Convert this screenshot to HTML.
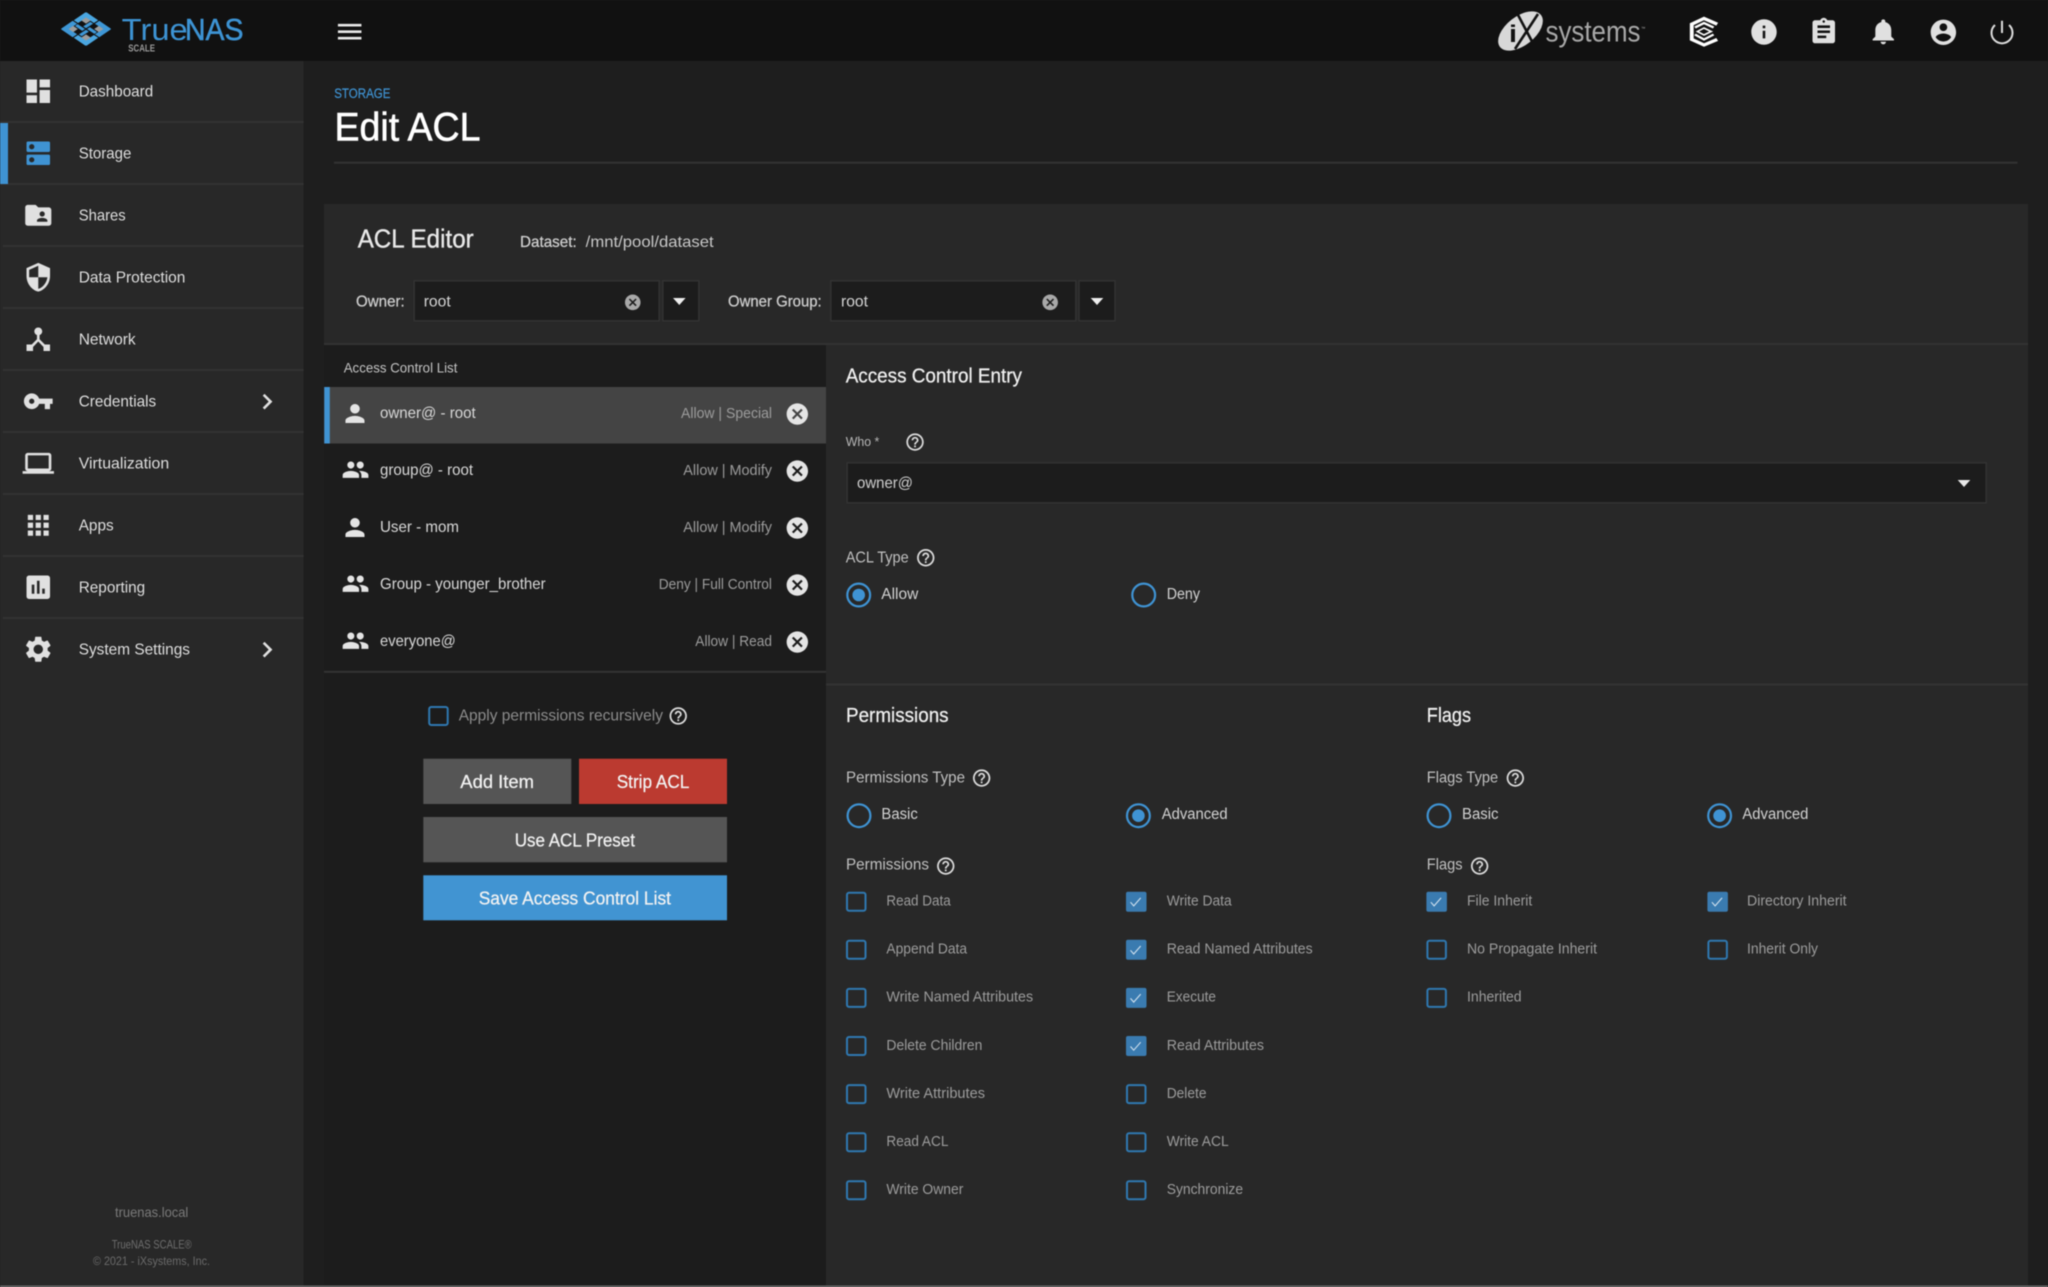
<!DOCTYPE html>
<html lang="en">
<head>
<meta charset="utf-8">
<title>Edit ACL - TrueNAS</title>
<style>
html,body{margin:0;padding:0;background:#1e1e1e;width:2048px;height:1287px;overflow:hidden}
svg{display:block;filter:blur(.45px)}
text{font-family:"Liberation Sans",Arial,sans-serif}
.nav{font-size:16px;fill:#dedede}
.row{font-size:16px;fill:#d8d8d8}
.st{font-size:14.6px;fill:#9c9c9c}
.lb{font-size:14.6px;fill:#9c9c9c}
.cap{font-size:16px;fill:#c0c0c0}
.rad{font-size:15.5px;fill:#d2d2d2}
.h{font-size:20px;fill:#f0f0f0;stroke:#f0f0f0;stroke-width:.25}
.btn{font-size:18px;fill:#f2f2f2;stroke:#f2f2f2;stroke-width:.25}
</style>
</head>
<body>
<svg width="2048" height="1287" viewBox="0 0 2048 1287" xmlns="http://www.w3.org/2000/svg">
<defs>
<path id="help" d="M11 18h2v-2h-2v2zm1-16C6.48 2 2 6.48 2 12s4.48 10 10 10 10-4.48 10-10S17.52 2 12 2zm0 18c-4.41 0-8-3.59-8-8s3.59-8 8-8 8 3.59 8 8-3.59 8-8 8zm0-14c-2.21 0-4 1.79-4 4h2c0-1.1.9-2 2-2s2 .9 2 2c0 2-3 1.75-3 5h2c0-2.25 3-2.5 3-5 0-2.21-1.79-4-4-4z"/>
<path id="cancel" d="M12 2C6.47 2 2 6.47 2 12s4.47 10 10 10 10-4.47 10-10S17.53 2 12 2zm5 13.59L15.59 17 12 13.41 8.41 17 7 15.59 10.59 12 7 8.41 8.41 7 12 10.59 15.59 7 17 8.41 13.41 12 17 15.59z"/>
<path id="person" d="M12 12c2.21 0 4-1.79 4-4s-1.79-4-4-4-4 1.79-4 4 1.79 4 4 4zm0 2c-2.67 0-8 1.34-8 4v2h16v-2c0-2.66-5.33-4-8-4z"/>
<path id="group" d="M16 11c1.66 0 2.99-1.34 2.99-3S17.66 5 16 5c-1.66 0-3 1.34-3 3s1.34 3 3 3zm-8 0c1.66 0 2.99-1.34 2.99-3S9.66 5 8 5C6.34 5 5 6.34 5 8s1.34 3 3 3zm0 2c-2.33 0-7 1.17-7 3.5V19h14v-2.5c0-2.33-4.67-3.5-7-3.5zm8 0c-.29 0-.62.02-.97.05 1.16.84 1.97 1.97 1.97 3.45V19h6v-2.5c0-2.33-4.67-3.5-7-3.5z"/>
<path id="chev" d="M10 6L8.59 7.41 13.17 12l-4.58 4.59L10 18l6-6z"/>
<g id="cb"><rect x="1" y="1" width="18.5" height="18" rx="2" fill="none" stroke="#2f78b0" stroke-width="2"/></g>
<g id="cc"><rect x="0" y="0" width="20.5" height="20" rx="2" fill="#3a7bb0"/><path d="M4.5 10.5l3.2 3.7 7-8" fill="none" stroke="#cfe0ee" stroke-width="1.1"/></g>
<g id="rad0"><circle r="11.4" fill="none" stroke="#3f93d3" stroke-width="2.2"/></g>
<g id="rad1"><circle r="11.4" fill="none" stroke="#3f93d3" stroke-width="2.2"/><circle r="6.3" fill="#3f93d3"/></g>
<g id="lg">
<polygon fill="#4aa6e0" points="86.5,12.3 98.2,20.2 93.9,23 82.2,15.2"/>
<polygon fill="#3e97d6" points="99.3,20.8 111,28.7 106.6,31.5 94.9,23.7"/>
</g>
</defs>

<rect width="2048" height="1287" fill="#1e1e1e"/>

<!-- top bar -->
<rect width="2048" height="61" fill="#111111"/>
<use href="#lg"/>
<use href="#lg" transform="matrix(-1 0 0 1 172 0)"/>
<use href="#lg" transform="matrix(1 0 0 -1 0 58)"/>
<use href="#lg" transform="matrix(-1 0 0 -1 172 58)"/>
<g fill="#9c9c9c">
<polygon points="86,17.4 90.6,20.5 86,23.6 81.4,20.5"/>
<polygon points="98.8,25.9 103.4,29 98.8,32.1 94.2,29"/>
<polygon points="73.2,25.9 77.8,29 73.2,32.1 68.6,29"/>
<polygon points="86,34.4 90.6,37.5 86,40.6 81.4,37.5"/>
</g>
<g fill="#3e97d6">
<polygon points="90.3,21.7 93.1,23.6 86,28.3 83.2,26.4"/>
<polygon points="89.8,27.1 97,32 94.4,33.9 87,29"/>
<polygon points="82.2,30.9 75,26 77.6,24.1 85,29"/>
<polygon points="81.7,36.3 78.9,34.4 86,29.7 88.8,31.6"/>
</g>
<text x="121.7" y="40" font-size="31" fill="#3d93d3" textLength="66" lengthAdjust="spacingAndGlyphs">True</text>
<text x="185" y="40" font-size="31" fill="#3d93d3" stroke="#3d93d3" stroke-width=".5" textLength="58.5" lengthAdjust="spacingAndGlyphs">NAS</text>
<text x="128.3" y="51.5" font-size="10" font-weight="bold" fill="#9a9a9a" textLength="26.7" lengthAdjust="spacingAndGlyphs">SCALE</text>
<path transform="translate(334,16) scale(1.306)" fill="#e8e8e8" d="M3 18h18v-2H3v2zm0-5h18v-2H3v2zm0-7v2h18V6H3z"/>

<!-- iX systems -->
<ellipse cx="1520.5" cy="31" rx="26" ry="14.5" transform="rotate(-38 1520.5 31)" fill="#d8d8d8"/>
<path d="M1517 13L1536 49M1538 14L1515 49" stroke="#111" stroke-width="2.6" fill="none"/>
<text x="1509" y="42" font-size="24" font-weight="bold" fill="#111111" textLength="8" lengthAdjust="spacingAndGlyphs">i</text>
<text x="1545.5" y="41.5" font-size="30" fill="#a8a8a8" textLength="95" lengthAdjust="spacingAndGlyphs">systems</text>
<text x="1641" y="30" font-size="4.5" fill="#aaaaaa">™</text>

<!-- truecommand -->
<g fill="none" stroke="#ffffff" transform="translate(1704 0) scale(1.2 1) translate(-1677 0)">
<path stroke-width="3.2" d="M1688 24.2L1677 18.4 1666.8 24.2V39.4L1677 45 1688 39.4"/>
<path stroke-width="1.6" d="M1671.5 31.5L1677 28 1683 31.5 1677 35Z"/>
<path stroke-width="2.2" d="M1669.5 34.5L1677 39.5 1685 34.5M1669.5 27.5L1677 23 1685 27.5"/>
</g>

<!-- top icons -->
<path transform="translate(1748.76,16.76) scale(1.27)" fill="#e0e0e0" d="M12 2C6.48 2 2 6.48 2 12s4.48 10 10 10 10-4.48 10-10S17.52 2 12 2zm1 15h-2v-6h2v6zm0-8h-2V7h2v2z"/>
<path transform="translate(1808.75,16.42) scale(1.25,1.28)" fill="#e0e0e0" d="M19 3h-4.18C14.4 1.84 13.3 1 12 1c-1.3 0-2.4.84-2.82 2H5c-1.1 0-2 .9-2 2v14c0 1.1.9 2 2 2h14c1.1 0 2-.9 2-2V5c0-1.1-.9-2-2-2zm-7 0c.55 0 1 .45 1 1s-.45 1-1 1-1-.45-1-1 .45-1 1-1zm2 14H7v-2h7v2zm3-4H7v-2h10v2zm0-4H7V7h10v2z"/>
<path transform="translate(1867.34,16.12) scale(1.33,1.28)" fill="#e0e0e0" d="M12 22c1.1 0 2-.9 2-2h-4c0 1.1.89 2 2 2zm6-6v-5c0-3.07-1.64-5.64-4.5-6.32V4c0-.83-.67-1.5-1.5-1.5s-1.5.67-1.5 1.5v.68C7.63 5.36 6 7.92 6 11v5l-2 2v1h16v-1l-2-2z"/>
<path transform="translate(1928.16,17.06) scale(1.27)" fill="#e0e0e0" d="M12 2C6.48 2 2 6.48 2 12s4.48 10 10 10 10-4.48 10-10S17.52 2 12 2zm0 3c1.66 0 3 1.34 3 3s-1.34 3-3 3-3-1.34-3-3 1.34-3 3-3zm0 14.2c-2.5 0-4.71-1.28-6-3.22.03-1.99 4-3.08 6-3.08 1.99 0 5.97 1.09 6 3.08-1.29 1.94-3.5 3.22-6 3.22z"/>
<path fill="none" stroke="#dddddd" stroke-width="2" d="M1995 25A10.5 10.5 0 1 0 2009 25M2002 20.7V33"/>

<!-- sidebar -->
<rect x="0" y="61" width="303.5" height="1225" fill="#282828"/>
<g fill="#333333">
<rect x="0" y="121" width="303.5" height="2"/>
<rect x="0" y="183" width="303.5" height="2"/>
<rect x="3" y="245" width="300.5" height="2"/>
<rect x="3" y="307" width="300.5" height="2"/>
<rect x="3" y="369" width="300.5" height="2"/>
<rect x="3" y="431" width="300.5" height="2"/>
<rect x="3" y="493" width="300.5" height="2"/>
<rect x="3" y="555" width="300.5" height="2"/>
<rect x="3" y="617" width="300.5" height="2"/>
</g>
<rect x="0" y="123" width="8" height="61" fill="#3f93d3"/>
<g fill="#e0e0e0">
<path transform="translate(22.6,75.6) scale(1.306)" d="M3 13h8V3H3v10zm0 8h8v-6H3v6zm10 0h8V11h-8v10zm0-18v6h8V3h-8z"/>
<path fill="#3f93d3" transform="translate(22.6,137.6) scale(1.306)" d="M20 13H4c-.55 0-1 .45-1 1v6c0 .55.45 1 1 1h16c.55 0 1-.45 1-1v-6c0-.55-.45-1-1-1zM7 19c-1.1 0-2-.9-2-2s.9-2 2-2 2 .9 2 2-.9 2-2 2zM20 3H4c-.55 0-1 .45-1 1v6c0 .55.45 1 1 1h16c.55 0 1-.45 1-1V4c0-.55-.45-1-1-1zM7 9c-1.1 0-2-.9-2-2s.9-2 2-2 2 .9 2 2-.9 2-2 2z"/>
<path transform="translate(22.6,199.6) scale(1.306)" d="M20 6h-8l-2-2H4c-1.1 0-1.99.9-1.99 2L2 18c0 1.1.9 2 2 2h16c1.1 0 2-.9 2-2V8c0-1.1-.9-2-2-2zm-5 3c1.1 0 2 .9 2 2s-.9 2-2 2-2-.9-2-2 .9-2 2-2zm4 8h-8v-1c0-1.33 2.67-2 4-2s4 .67 4 2v1z"/>
<path transform="translate(22.6,261.6) scale(1.306)" d="M12 1L3 5v6c0 5.55 3.84 10.74 9 12 5.16-1.26 9-6.45 9-12V5l-9-4zm0 10.99h7c-.53 4.12-3.28 7.79-7 8.94V12H5V6.3l7-3.11v8.8z"/>
<path transform="translate(22.6,323.6) scale(1.306)" d="M17 16l-4-4V8.82C14.16 8.4 15 7.3 15 6c0-1.66-1.34-3-3-3S9 4.34 9 6c0 1.3.84 2.4 2 2.82V12l-4 4H3v5h5v-3.05l4-4.2 4 4.2V21h5v-5h-4z"/>
<path transform="translate(22.6,385.6) scale(1.306)" d="M12.65 10C11.83 7.67 9.61 6 7 6c-3.31 0-6 2.69-6 6s2.69 6 6 6c2.61 0 4.83-1.67 5.65-4H17v4h4v-4h2v-4H12.65zM7 14c-1.1 0-2-.9-2-2s.9-2 2-2 2 .9 2 2-.9 2-2 2z"/>
<path transform="translate(22.6,447.6) scale(1.306)" d="M20 18c1.1 0 1.99-.9 1.99-2L22 6c0-1.1-.9-2-2-2H4c-1.1 0-2 .9-2 2v10c0 1.1.9 2 2 2H0v2h24v-2h-4zM4 6h16v10H4V6z"/>
<path transform="translate(22.6,509.6) scale(1.306)" d="M4 8h4V4H4v4zm6 12h4v-4h-4v4zm-6 0h4v-4H4v4zm0-6h4v-4H4v4zm6 0h4v-4h-4v4zm6-10v4h4V4h-4zm-6 4h4V4h-4v4zm6 6h4v-4h-4v4zm0 6h4v-4h-4v4z"/>
<path transform="translate(22.6,571.6) scale(1.306)" d="M19 3H5c-1.1 0-2 .9-2 2v14c0 1.1.9 2 2 2h14c1.1 0 2-.9 2-2V5c0-1.1-.9-2-2-2zM9 17H7v-7h2v7zm4 0h-2V7h2v10zm4 0h-2v-4h2v4z"/>
<path transform="translate(22.6,633.6) scale(1.306)" d="M19.14 12.94c.04-.3.06-.61.06-.94 0-.32-.02-.64-.07-.94l2.03-1.58c.18-.14.23-.41.12-.61l-1.92-3.32c-.12-.22-.37-.29-.59-.22l-2.39.96c-.5-.38-1.03-.7-1.62-.94l-.36-2.54c-.04-.24-.24-.41-.48-.41h-3.84c-.24 0-.43.17-.47.41l-.36 2.54c-.59.24-1.13.57-1.62.94l-2.39-.96c-.22-.08-.47 0-.59.22L2.74 8.87c-.12.21-.08.47.12.61l2.03 1.58c-.05.3-.09.63-.09.94s.02.64.07.94l-2.03 1.58c-.18.14-.23.41-.12.61l1.92 3.32c.12.22.37.29.59.22l2.39-.96c.5.38 1.03.7 1.62.94l.36 2.54c.05.24.24.41.48.41h3.84c.24 0 .44-.17.47-.41l.36-2.54c.59-.24 1.13-.56 1.62-.94l2.39.96c.22.08.47 0 .59-.22l1.92-3.32c.12-.22.07-.47-.12-.61l-2.01-1.58zM12 15.6c-1.98 0-3.6-1.62-3.6-3.6s1.62-3.6 3.6-3.6 3.6 1.62 3.6 3.6-1.62 3.6-3.6 3.6z"/>
<use href="#chev" transform="translate(251.5,386) scale(1.306)"/>
<use href="#chev" transform="translate(251.5,634) scale(1.306)"/>
</g>
<text class="nav" x="78.7" y="96.5" textLength="74.5" lengthAdjust="spacingAndGlyphs">Dashboard</text>
<text class="nav" x="78.7" y="158.5" textLength="52.7" lengthAdjust="spacingAndGlyphs">Storage</text>
<text class="nav" x="78.7" y="220.5" textLength="47" lengthAdjust="spacingAndGlyphs">Shares</text>
<text class="nav" x="78.7" y="282.5" textLength="106.7" lengthAdjust="spacingAndGlyphs">Data Protection</text>
<text class="nav" x="78.7" y="344.5" textLength="57" lengthAdjust="spacingAndGlyphs">Network</text>
<text class="nav" x="78.7" y="406.5" textLength="77.5" lengthAdjust="spacingAndGlyphs">Credentials</text>
<text class="nav" x="78.7" y="468.5" textLength="90.5" lengthAdjust="spacingAndGlyphs">Virtualization</text>
<text class="nav" x="78.7" y="530.5" textLength="35" lengthAdjust="spacingAndGlyphs">Apps</text>
<text class="nav" x="78.7" y="592.5" textLength="66.5" lengthAdjust="spacingAndGlyphs">Reporting</text>
<text class="nav" x="78.7" y="654.5" textLength="111.3" lengthAdjust="spacingAndGlyphs">System Settings</text>
<text x="115" y="1217" font-size="14" fill="#7a7a7a" textLength="73.3" lengthAdjust="spacingAndGlyphs">truenas.local</text>
<text x="111.7" y="1248.7" font-size="11.8" fill="#6e6e6e" textLength="80" lengthAdjust="spacingAndGlyphs">TrueNAS SCALE®</text>
<text x="93" y="1265" font-size="11.8" fill="#6a6a6a" textLength="117" lengthAdjust="spacingAndGlyphs">© 2021 - iXsystems, Inc.</text>

<!-- page title -->
<text x="334.2" y="98" font-size="14" fill="#3f93d3" stroke="#3f93d3" stroke-width=".2" textLength="56.3" lengthAdjust="spacingAndGlyphs">STORAGE</text>
<text x="334.5" y="140.5" font-size="40" fill="#ffffff" stroke="#ffffff" stroke-width=".6" textLength="146" lengthAdjust="spacingAndGlyphs">Edit ACL</text>
<rect x="334" y="161.7" width="1683.5" height="2" fill="#333333"/>

<!-- card -->
<rect x="324" y="204" width="1704" height="1082" fill="#282828"/>
<rect x="324" y="343" width="1704" height="2" fill="#333333"/>
<text x="357.7" y="247.5" font-size="25.6" fill="#e8e8e8" stroke="#e8e8e8" stroke-width=".35" textLength="116" lengthAdjust="spacingAndGlyphs">ACL Editor</text>
<text x="520" y="247.2" font-size="16" fill="#cfcfcf" stroke="#cfcfcf" stroke-width=".25" textLength="56.7" lengthAdjust="spacingAndGlyphs">Dataset:</text>
<text x="585.7" y="247.2" font-size="16" fill="#c8c8c8" textLength="128" lengthAdjust="spacingAndGlyphs">/mnt/pool/dataset</text>

<!-- owner row -->
<text x="356" y="306.5" font-size="16" fill="#cfcfcf" stroke="#cfcfcf" stroke-width=".25" textLength="48.7" lengthAdjust="spacingAndGlyphs">Owner:</text>
<rect x="414.2" y="280.8" width="245" height="40" fill="#1c1c1c" stroke="#333333" stroke-width="1.4"/>
<text x="423.7" y="306.5" font-size="16" fill="#d4d4d4" textLength="27" lengthAdjust="spacingAndGlyphs">root</text>
<use href="#cancel" transform="translate(623.4,293) scale(.78)" fill="#a8a8a8"/>
<rect x="662.8" y="280.8" width="36" height="40" fill="#1c1c1c" stroke="#333333" stroke-width="1.4"/>
<polygon points="673,298 685.6,298 679.3,305" fill="#eeeeee"/>
<text x="728" y="306.5" font-size="16" fill="#cfcfcf" stroke="#cfcfcf" stroke-width=".25" textLength="93.7" lengthAdjust="spacingAndGlyphs">Owner Group:</text>
<rect x="830.8" y="280.8" width="245" height="40" fill="#1c1c1c" stroke="#333333" stroke-width="1.4"/>
<text x="841" y="306.5" font-size="16" fill="#d4d4d4" textLength="27" lengthAdjust="spacingAndGlyphs">root</text>
<use href="#cancel" transform="translate(1040.8,293) scale(.78)" fill="#a8a8a8"/>
<rect x="1079" y="280.8" width="36" height="40" fill="#1c1c1c" stroke="#333333" stroke-width="1.4"/>
<polygon points="1090.7,298 1103.3,298 1097,305" fill="#eeeeee"/>

<!-- left list panel -->
<rect x="324" y="345" width="502" height="941" fill="#1c1c1c"/>
<text x="343.7" y="372.7" font-size="13.6" fill="#c4c4c4" textLength="113.7" lengthAdjust="spacingAndGlyphs">Access Control List</text>
<rect x="324" y="387" width="502" height="56.5" fill="#444444"/>
<rect x="324.3" y="387" width="5.5" height="56.5" fill="#3f93d3"/>
<g fill="#e4e4e4">
<use href="#person" transform="translate(340.7,399.2) scale(1.19)"/>
<use href="#group" transform="translate(341.5,455.7) scale(1.17)"/>
<use href="#person" transform="translate(340.7,513.2) scale(1.19)"/>
<use href="#group" transform="translate(341.5,569.7) scale(1.17)"/>
<use href="#group" transform="translate(341.5,626.7) scale(1.17)"/>
<use href="#cancel" transform="translate(784.5,401.2) scale(1.07)"/>
<use href="#cancel" transform="translate(784.5,458.2) scale(1.07)"/>
<use href="#cancel" transform="translate(784.5,515.2) scale(1.07)"/>
<use href="#cancel" transform="translate(784.5,572.2) scale(1.07)"/>
<use href="#cancel" transform="translate(784.5,629.2) scale(1.07)"/>
</g>
<text class="row" x="380" y="418" textLength="95.7" lengthAdjust="spacingAndGlyphs">owner@ - root</text>
<text class="row" x="380" y="475" textLength="93" lengthAdjust="spacingAndGlyphs">group@ - root</text>
<text class="row" x="380" y="532" textLength="79" lengthAdjust="spacingAndGlyphs">User - mom</text>
<text class="row" x="380" y="589" textLength="165.7" lengthAdjust="spacingAndGlyphs">Group - younger_brother</text>
<text class="row" x="380" y="646" textLength="75.7" lengthAdjust="spacingAndGlyphs">everyone@</text>
<text class="st" x="681" y="418" textLength="91" lengthAdjust="spacingAndGlyphs">Allow | Special</text>
<text class="st" x="683.3" y="475" textLength="88.7" lengthAdjust="spacingAndGlyphs">Allow | Modify</text>
<text class="st" x="683.3" y="532" textLength="88.7" lengthAdjust="spacingAndGlyphs">Allow | Modify</text>
<text class="st" x="658.7" y="589" textLength="113.3" lengthAdjust="spacingAndGlyphs">Deny | Full Control</text>
<text class="st" x="695.3" y="646" textLength="76.7" lengthAdjust="spacingAndGlyphs">Allow | Read</text>
<rect x="324" y="670.8" width="502" height="2" fill="#333333"/>
<use href="#cb" transform="translate(428.2,706)"/>
<text x="458.7" y="720.5" font-size="16" fill="#8c8c8c" textLength="204.3" lengthAdjust="spacingAndGlyphs">Apply permissions recursively</text>
<use href="#help" transform="translate(667.8,705.5) scale(.87)" fill="#dcdcdc"/>
<rect x="423.3" y="758.7" width="148" height="45.3" fill="#555555"/>
<text class="btn" x="460.3" y="788" textLength="73.7" lengthAdjust="spacingAndGlyphs">Add Item</text>
<rect x="579" y="758.7" width="148" height="45.3" fill="#bb3a30"/>
<text class="btn" x="616.7" y="788" textLength="72.7" lengthAdjust="spacingAndGlyphs">Strip ACL</text>
<rect x="423.3" y="817" width="303.7" height="45.3" fill="#555555"/>
<text class="btn" x="514.7" y="846.3" textLength="120.3" lengthAdjust="spacingAndGlyphs">Use ACL Preset</text>
<rect x="423.3" y="875.3" width="303.7" height="45" fill="#4194d2"/>
<text class="btn" x="478.7" y="904.7" textLength="192.3" lengthAdjust="spacingAndGlyphs">Save Access Control List</text>

<!-- right panel -->
<rect x="826" y="683.5" width="1202" height="2" fill="#333333"/>
<text class="h" x="845.7" y="382.5" textLength="176.3" lengthAdjust="spacingAndGlyphs">Access Control Entry</text>
<text x="845.7" y="446" font-size="13" fill="#b8b8b8" textLength="33.6" lengthAdjust="spacingAndGlyphs">Who *</text>
<g fill="#dcdcdc">
<use href="#help" transform="translate(904.6,431.6) scale(.87)"/>
<use href="#help" transform="translate(915.3,547.3) scale(.87)"/>
<use href="#help" transform="translate(971.2,767.6) scale(.87)"/>
<use href="#help" transform="translate(935.3,855.6) scale(.87)"/>
<use href="#help" transform="translate(1504.9,767.6) scale(.87)"/>
<use href="#help" transform="translate(1469.2,855.6) scale(.87)"/>
</g>
<rect x="847.2" y="462.8" width="1139" height="40" fill="#1c1c1c" stroke="#333333" stroke-width="1.4"/>
<text x="857" y="487.8" font-size="16" fill="#cfcfcf" textLength="56" lengthAdjust="spacingAndGlyphs">owner@</text>
<polygon points="1957.7,480 1970.3,480 1964,487" fill="#e8e8e8"/>

<text class="cap" x="845.7" y="562.5" textLength="63" lengthAdjust="spacingAndGlyphs">ACL Type</text>
<use href="#rad1" transform="translate(858.7,595)"/>
<text class="rad" x="881.3" y="599" textLength="37" lengthAdjust="spacingAndGlyphs">Allow</text>
<use href="#rad0" transform="translate(1143.7,595)"/>
<text class="rad" x="1166.7" y="599" textLength="33.3" lengthAdjust="spacingAndGlyphs">Deny</text>

<text class="h" x="846" y="721.8" textLength="102.6" lengthAdjust="spacingAndGlyphs">Permissions</text>
<text class="h" x="1426.8" y="721.8" textLength="44.2" lengthAdjust="spacingAndGlyphs">Flags</text>

<text class="cap" x="846" y="782.5" textLength="119" lengthAdjust="spacingAndGlyphs">Permissions Type</text>
<use href="#rad0" transform="translate(859,815.7)"/>
<text class="rad" x="881.4" y="819" textLength="36.4" lengthAdjust="spacingAndGlyphs">Basic</text>
<use href="#rad1" transform="translate(1138.4,815.7)"/>
<text class="rad" x="1161.7" y="819" textLength="66" lengthAdjust="spacingAndGlyphs">Advanced</text>
<text class="cap" x="846" y="869.7" textLength="83" lengthAdjust="spacingAndGlyphs">Permissions</text>

<text class="cap" x="1426.8" y="782.5" textLength="71.4" lengthAdjust="spacingAndGlyphs">Flags Type</text>
<use href="#rad0" transform="translate(1439,815.7)"/>
<text class="rad" x="1462" y="819" textLength="36.5" lengthAdjust="spacingAndGlyphs">Basic</text>
<use href="#rad1" transform="translate(1719.6,815.7)"/>
<text class="rad" x="1742.4" y="819" textLength="66" lengthAdjust="spacingAndGlyphs">Advanced</text>
<text class="cap" x="1426.8" y="869.7" textLength="35.7" lengthAdjust="spacingAndGlyphs">Flags</text>

<!-- permission checkboxes col 1 -->
<use href="#cb" transform="translate(846,891.7)"/>
<use href="#cb" transform="translate(846,939.8)"/>
<use href="#cb" transform="translate(846,987.9)"/>
<use href="#cb" transform="translate(846,1036)"/>
<use href="#cb" transform="translate(846,1084.1)"/>
<use href="#cb" transform="translate(846,1132.2)"/>
<use href="#cb" transform="translate(846,1180.3)"/>
<text class="lb" x="886.4" y="905.5" textLength="64.3" lengthAdjust="spacingAndGlyphs">Read Data</text>
<text class="lb" x="886.4" y="953.6" textLength="80.7" lengthAdjust="spacingAndGlyphs">Append Data</text>
<text class="lb" x="886.4" y="1001.7" textLength="146.7" lengthAdjust="spacingAndGlyphs">Write Named Attributes</text>
<text class="lb" x="886.4" y="1049.8" textLength="96" lengthAdjust="spacingAndGlyphs">Delete Children</text>
<text class="lb" x="886.4" y="1097.9" textLength="98.6" lengthAdjust="spacingAndGlyphs">Write Attributes</text>
<text class="lb" x="886.4" y="1146" textLength="62" lengthAdjust="spacingAndGlyphs">Read ACL</text>
<text class="lb" x="886.4" y="1194.1" textLength="77" lengthAdjust="spacingAndGlyphs">Write Owner</text>

<!-- permission checkboxes col 2 -->
<use href="#cc" transform="translate(1126,891.7)"/>
<use href="#cc" transform="translate(1126,939.8)"/>
<use href="#cc" transform="translate(1126,987.9)"/>
<use href="#cc" transform="translate(1126,1036)"/>
<use href="#cb" transform="translate(1126,1084.1)"/>
<use href="#cb" transform="translate(1126,1132.2)"/>
<use href="#cb" transform="translate(1126,1180.3)"/>
<text class="lb" x="1166.7" y="905.5" textLength="65" lengthAdjust="spacingAndGlyphs">Write Data</text>
<text class="lb" x="1166.7" y="953.6" textLength="146" lengthAdjust="spacingAndGlyphs">Read Named Attributes</text>
<text class="lb" x="1166.7" y="1001.7" textLength="49.3" lengthAdjust="spacingAndGlyphs">Execute</text>
<text class="lb" x="1166.7" y="1049.8" textLength="97.3" lengthAdjust="spacingAndGlyphs">Read Attributes</text>
<text class="lb" x="1166.7" y="1097.9" textLength="39.8" lengthAdjust="spacingAndGlyphs">Delete</text>
<text class="lb" x="1166.7" y="1146" textLength="62" lengthAdjust="spacingAndGlyphs">Write ACL</text>
<text class="lb" x="1166.7" y="1194.1" textLength="76.4" lengthAdjust="spacingAndGlyphs">Synchronize</text>

<!-- flags -->
<use href="#cc" transform="translate(1426.4,891.7)"/>
<use href="#cb" transform="translate(1426.4,939.8)"/>
<use href="#cb" transform="translate(1426.4,987.9)"/>
<use href="#cc" transform="translate(1707.4,891.7)"/>
<use href="#cb" transform="translate(1707.4,939.8)"/>
<text class="lb" x="1467" y="905.5" textLength="65.3" lengthAdjust="spacingAndGlyphs">File Inherit</text>
<text class="lb" x="1467" y="953.6" textLength="130" lengthAdjust="spacingAndGlyphs">No Propagate Inherit</text>
<text class="lb" x="1467" y="1001.7" textLength="54.6" lengthAdjust="spacingAndGlyphs">Inherited</text>
<text class="lb" x="1747" y="905.5" textLength="99.6" lengthAdjust="spacingAndGlyphs">Directory Inherit</text>
<text class="lb" x="1747" y="953.6" textLength="71" lengthAdjust="spacingAndGlyphs">Inherit Only</text>

<!-- bottom edge -->
<rect x="0" y="1285.6" width="2048" height="1.4" fill="#777777"/>
</svg>
</body>
</html>
